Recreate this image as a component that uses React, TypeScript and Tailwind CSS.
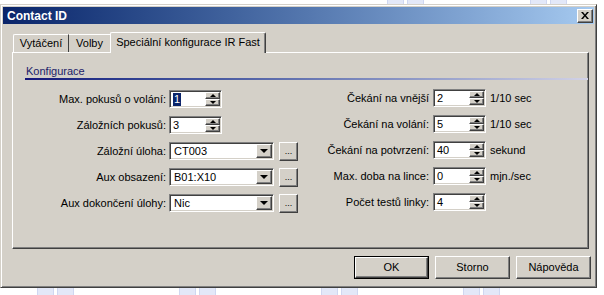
import React from 'react';

const raised =
    'border border-t-white border-l-white border-b-[#404040] border-r-[#404040] shadow-[inset_-1px_-1px_0_#808080]';
const sunken =
    'border border-t-[#808080] border-l-[#808080] border-b-white border-r-white shadow-[inset_1px_1px_0_#404040,inset_-1px_-1px_0_#d4d0c8]';

const UpArrow = () => <div className="w-0 h-0 border-x-[3px] border-x-transparent border-b-[3px] border-b-black" />;
const DownArrow = () => <div className="w-0 h-0 border-x-[3px] border-x-transparent border-t-[3px] border-t-black" />;

const Spin: React.FC<{ value: string; selected?: boolean }> = ({ value, selected }) => (
    <div className={`flex w-[53px] h-[18px] bg-white p-[1px] ${sunken}`}>
        <div className="flex-1 flex items-center pl-[2px] text-[11px] leading-none">
            {selected ? <span className="bg-[#0a246a] text-white px-[1px] py-[1px]">{value}</span> : <span>{value}</span>}
        </div>
        <div className="flex flex-col w-[15px]">
            <div className={`flex-1 flex items-center justify-center bg-[#d4d0c8] ${raised}`}>
                <UpArrow />
            </div>
            <div className={`flex-1 flex items-center justify-center bg-[#d4d0c8] ${raised}`}>
                <DownArrow />
            </div>
        </div>
    </div>
);

const Combo: React.FC<{ value: string }> = ({ value }) => (
    <div className="flex items-center gap-[5px]">
        <div className={`flex w-[105px] h-[18px] bg-white p-[1px] ${sunken}`}>
            <div className="flex-1 flex items-center pl-[3px] text-[11px] leading-none">{value}</div>
            <div className={`w-[16px] flex items-center justify-center bg-[#d4d0c8] ${raised}`}>
                <div className="w-0 h-0 border-x-[4px] border-x-transparent border-t-[4px] border-t-black" />
            </div>
        </div>
        <div className={`w-[19px] h-[19px] flex items-end justify-center pb-[4px] bg-[#d4d0c8] text-[9px] leading-none ${raised}`}>
            ...
        </div>
    </div>
);

const leftRows: { label: string; control: React.ReactNode }[] = [
    { label: 'Max. pokusů o volání:', control: <Spin value="1" selected /> },
    { label: 'Záložních pokusů:', control: <Spin value="3" /> },
    { label: 'Záložní úloha:', control: <Combo value="CT003" /> },
    { label: 'Aux obsazení:', control: <Combo value="B01:X10" /> },
    { label: 'Aux dokončení úlohy:', control: <Combo value="Nic" /> },
];

const rightRows = [
    { label: 'Čekání na vnější', value: '2', unit: '1/10 sec' },
    { label: 'Čekání na volání:', value: '5', unit: '1/10 sec' },
    { label: 'Čekání na potvrzení:', value: '40', unit: 'sekund' },
    { label: 'Max. doba na lince:', value: '0', unit: 'mjn./sec' },
    { label: 'Počet testů linky:', value: '4', unit: '' },
];

const Square: React.FC<{ ml: string }> = ({ ml }) => (
    <div className={`${ml} w-[17px] h-full shrink-0 bg-[#e3e8f8] border-x border-[#cfd7f1]`} />
);

const Button: React.FC<{ label: string; isDefault?: boolean }> = ({ label, isDefault }) => (
    <div className={`w-[75px] h-[23px] ${isDefault ? 'border border-black' : ''}`}>
        <div className={`w-full h-full flex items-center justify-center bg-[#d4d0c8] text-[11px] leading-none ${raised}`}>
            {label}
        </div>
    </div>
);

export default function App() {
    return (
        <div className="w-[604px] h-[295px] bg-white flex flex-col font-['Liberation_Sans',Arial,sans-serif] text-black overflow-hidden">
            {/* backdrop strip at the top */}
            <div className="h-[4px] flex">
                <Square ml="ml-[387px]" />
                <Square ml="ml-[3px]" />
                <Square ml="ml-[106px]" />
                <Square ml="ml-[3px]" />
            </div>

            <div className="w-[597px] h-[284px] flex flex-col p-[2px] bg-[#d4d0c8] border border-t-[#d4d0c8] border-l-[#d4d0c8] border-b-[#404040] border-r-[#404040] shadow-[inset_1px_1px_0_#fff,inset_-1px_-1px_0_#808080]">
                {/* title bar */}
                <div className="h-[17px] flex items-center justify-between pl-[4px] pr-[1px] bg-linear-to-r from-[#0a246a] to-[#a6caf0]">
                    <span className="text-white font-bold text-[12px] leading-none">Contact ID</span>
                    <div className={`w-[16px] h-[14px] flex items-center justify-center bg-[#d4d0c8] ${raised}`}>
                        <svg width="8" height="7" viewBox="0 0 8 7">
                            <path d="M0 0h2l2 2.5L6 0h2L5 3.5 8 7H6L4 4.5 2 7H0l3-3.5z" fill="black" />
                        </svg>
                    </div>
                </div>

                {/* tabs */}
                <div className="flex items-end ml-[10px] mt-[8px] h-[20px] text-[11px] leading-none">
                    <div className="w-[56px] h-[18px] flex items-center justify-center border-t border-l border-t-white border-l-white border-r border-r-[#404040] rounded-tl-[2px]">
                        Vytáčení
                    </div>
                    <div className="w-[41px] h-[18px] flex items-center justify-center border-t border-t-white">
                        Volby
                    </div>
                    <div className="relative z-10 -mb-[1px] w-[156px] h-[21px] flex items-center justify-center pb-[1px] bg-[#d4d0c8] border-t border-l border-t-white border-l-white border-r border-r-[#404040] shadow-[inset_-1px_0_0_#808080] rounded-t-[2px]">
                        Speciální konfigurace IR Fast
                    </div>
                </div>

                {/* tab panel */}
                <div className={`ml-[9px] w-[577px] h-[197px] pl-[12px] pt-[12px] ${raised}`}>
                    <div className="text-[11px] leading-[12px] text-[#1c2268] pl-[1px]">Konfigurace</div>
                    <div className="mt-[1px] h-[2px] bg-linear-to-r from-[#15157a] to-[#d2d2e6]" />

                    <div className="flex mt-[9px]">
                        <div className="w-[273px] flex flex-col gap-[8px] pt-[1px]">
                            {leftRows.map((r) => (
                                <div key={r.label} className="flex items-center h-[18px]">
                                    <div className="w-[142px] text-right text-[11px] leading-none pr-[1px]">{r.label}</div>
                                    <div className="ml-[2px]">{r.control}</div>
                                </div>
                            ))}
                        </div>
                        <div className="flex flex-col gap-[8px]">
                            {rightRows.map((r) => (
                                <div key={r.label} className="flex items-center h-[18px]">
                                    <div className="w-[132px] text-right text-[11px] leading-none pr-[1px]">{r.label}</div>
                                    <div className="ml-[3px]">
                                        <Spin value={r.value} />
                                    </div>
                                    <div className="ml-[4px] text-[11px] leading-none">{r.unit}</div>
                                </div>
                            ))}
                        </div>
                    </div>
                </div>

                {/* buttons */}
                <div className="flex justify-end gap-[6px] mt-[7px] mr-[3px]">
                    <Button label="OK" isDefault />
                    <Button label="Storno" />
                    <Button label="Nápověda" />
                </div>
            </div>

            {/* backdrop strip at the bottom */}
            <div className="flex-1 flex">
                <Square ml="ml-[37px]" />
                <Square ml="ml-[3px]" />
                <Square ml="ml-[105px]" />
                <Square ml="ml-[3px]" />
                <Square ml="ml-[105px]" />
                <Square ml="ml-[3px]" />
                <Square ml="ml-[105px]" />
                <Square ml="ml-[3px]" />
            </div>
        </div>
    );
}
